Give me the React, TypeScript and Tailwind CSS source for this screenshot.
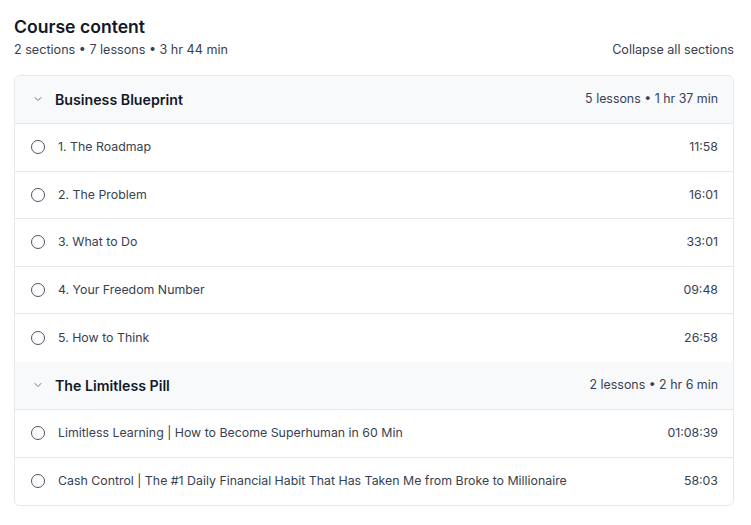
import { ChevronDown } from "lucide-react";

type Lesson = { title: string; duration: string };
type Section = { title: string; meta: string; lessons: Lesson[] };

const sections: Section[] = [
  {
    title: "Business Blueprint",
    meta: "5 lessons • 1 hr 37 min",
    lessons: [
      { title: "1. The Roadmap", duration: "11:58" },
      { title: "2. The Problem", duration: "16:01" },
      { title: "3. What to Do", duration: "33:01" },
      { title: "4. Your Freedom Number", duration: "09:48" },
      { title: "5. How to Think", duration: "26:58" },
    ],
  },
  {
    title: "The Limitless Pill",
    meta: "2 lessons • 2 hr 6 min",
    lessons: [
      { title: "Limitless Learning | How to Become Superhuman in 60 Min", duration: "01:08:39" },
      {
        title: "Cash Control | The #1 Daily Financial Habit That Has Taken Me from Broke to Millionaire",
        duration: "58:03",
      },
    ],
  },
];

export default function App() {
  return (
    <div className="min-h-screen bg-white pl-[14px] pr-[17px] pt-[15px] font-['Inter','Liberation_Sans',sans-serif] text-[#1f2937]">
      <h2 className="text-[17.6px] font-semibold leading-6 text-[#111827]">Course content</h2>
      <div className="mt-[3px] flex items-center justify-between text-[12.6px] leading-4 text-[#374151]">
        <span>2 sections • 7 lessons • 3 hr 44 min</span>
        <button className="text-[#374151]">Collapse all sections</button>
      </div>

      <div className="mt-[17px] overflow-hidden rounded-md border border-[#e5e7eb]">
        {sections.map((section) => (
          <div key={section.title}>
            <div className="flex h-12 items-center justify-between border-b border-[#e5e7eb] bg-[#f8f9fb] pl-4 pr-[15px]">
              <div className="flex items-center gap-[10px]">
                <span className="flex w-[14px] justify-center text-[#4b5563]">
                  <ChevronDown size={12} strokeWidth={1.6} />
                </span>
                <span className="text-[14.2px] font-semibold text-[#111827]">{section.title}</span>
              </div>
              <span className="text-[12.4px] text-[#374151]">{section.meta}</span>
            </div>
            {section.lessons.map((lesson, i) => (
              <div
                key={lesson.title}
                className={
                  i < section.lessons.length - 1
                    ? "flex h-[47.6px] items-center justify-between border-b border-[#e5e7eb] pl-4 pr-[15px]"
                    : "flex h-[47.6px] items-center justify-between pl-4 pr-[15px]"
                }
              >
                <div className="flex items-center gap-[13px]">
                  <span className="h-[14px] w-[14px] rounded-full border-[1.5px] border-[#4b5563]" />
                  <span className="text-[12.35px] text-[#374151]">{lesson.title}</span>
                </div>
                <span className="text-[12.35px] text-[#374151]">{lesson.duration}</span>
              </div>
            ))}
          </div>
        ))}
      </div>
    </div>
  );
}
